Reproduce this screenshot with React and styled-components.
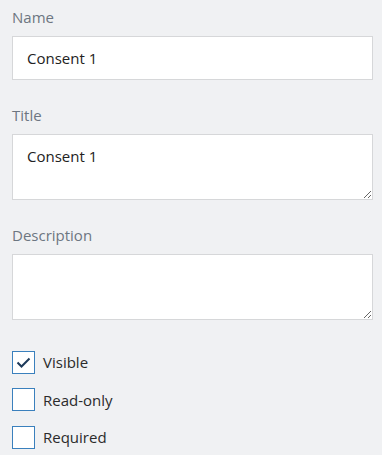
import React, { useState } from 'react'
import styled, { createGlobalStyle } from 'styled-components'

const GlobalStyle = createGlobalStyle`
  html, body {
    margin: 0;
    padding: 0;
    background: #f0f1f3;
  }
  body {
    font-family: "Open Sans", "Noto Sans", sans-serif;
  }
`

const Panel = styled.div`
  padding: 7px 9px 0 12px;
  display: flex;
  flex-direction: column;
`

const Field = styled.div`
  display: flex;
  flex-direction: column;
  margin-bottom: ${(props) => props.gap || 25}px;
`

const Label = styled.label`
  font-size: 15px;
  line-height: 20px;
  color: #6d7681;
  margin-bottom: 9px;
`

const TextInput = styled.input`
  box-sizing: border-box;
  height: 44px;
  width: 100%;
  margin: 0;
  padding: 0 14px;
  border: 1px solid #d6d7d9;
  border-radius: 0;
  background: #fff;
  font-family: inherit;
  font-size: 15px;
  color: #222;
  outline: none;
`

const TextArea = styled.textarea`
  box-sizing: border-box;
  display: block;
  height: 66px;
  width: 100%;
  margin: 0;
  padding: 11px 14px;
  border: 1px solid #d6d7d9;
  border-radius: 0;
  background: #fff;
  font-family: inherit;
  font-size: 15px;
  line-height: 20px;
  color: #222;
  resize: vertical;
  outline: none;
`

const CheckList = styled.div`
  display: flex;
  flex-direction: column;
  gap: 15px;
`

const CheckRow = styled.label`
  display: flex;
  align-items: center;
  gap: 8px;
  height: 22.5px;
  cursor: pointer;
  font-size: 15px;
  color: #2b2b2b;
`

const Box = styled.span`
  box-sizing: border-box;
  width: 23px;
  height: 23px;
  border: 1px solid #3a80bd;
  background: #fff;
  display: flex;
  align-items: center;
  justify-content: center;
`

const HiddenInput = styled.input`
  display: none;
`

function Checkbox({ label, checked, onChange }) {
  return (
    <CheckRow>
      <HiddenInput type="checkbox" checked={checked} onChange={onChange} />
      <Box>
        {checked && (
          <svg width="21" height="21" viewBox="0 0 21 21">
            <polyline
              points="4.5,10.5 8.5,14.5 16.5,6.5"
              fill="none"
              stroke="#1d3a5a"
              strokeWidth="2"
            />
          </svg>
        )}
      </Box>
      {label}
    </CheckRow>
  )
}

export default function App() {
  const [name, setName] = useState('Consent 1')
  const [title, setTitle] = useState('Consent 1')
  const [desc, setDesc] = useState('')
  const [flags, setFlags] = useState({ visible: true, readOnly: false, required: false })

  const toggle = (key) => () => setFlags({ ...flags, [key]: !flags[key] })

  return (
    <React.Fragment>
      <GlobalStyle />
      <Panel>
        <Field>
          <Label>Name</Label>
          <TextInput value={name} onChange={(e) => setName(e.target.value)} />
        </Field>
        <Field>
          <Label>Title</Label>
          <TextArea value={title} onChange={(e) => setTitle(e.target.value)} />
        </Field>
        <Field gap={31}>
          <Label>Description</Label>
          <TextArea value={desc} onChange={(e) => setDesc(e.target.value)} />
        </Field>
        <CheckList>
          <Checkbox label="Visible" checked={flags.visible} onChange={toggle('visible')} />
          <Checkbox label="Read-only" checked={flags.readOnly} onChange={toggle('readOnly')} />
          <Checkbox label="Required" checked={flags.required} onChange={toggle('required')} />
        </CheckList>
      </Panel>
    </React.Fragment>
  )
}
